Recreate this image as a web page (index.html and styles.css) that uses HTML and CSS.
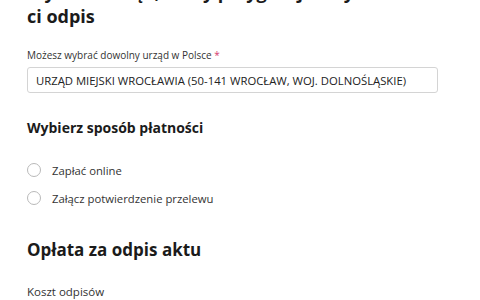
FILE: index.html
```html
<!DOCTYPE html>
<html lang="pl">
	<head>
		<meta charset="UTF-8" />
		<meta name="viewport" content="width=device-width, initial-scale=1.0" />
		<title>Odpis aktu</title>
		<link rel="stylesheet" href="styles.css">
	</head>
	<body>
		<div class="container">
			<h1>Wybierz urząd, który przygotuje i wyśle<br>ci odpis</h1>

			<div class="field">
				<label for="office">Możesz wybrać dowolny urząd w Polsce <span class="required">*</span></label>
				<input type="text" id="office" value="URZĄD MIEJSKI WROCŁAWIA (50-141 WROCŁAW, WOJ. DOLNOŚLĄSKIE)" />
			</div>

			<h2>Wybierz sposób płatności</h2>
			<div class="radio-group">
				<label class="radio">
					<input type="radio" name="payment" value="online" />
					<span class="radio-mark"></span>
					Zapłać online
				</label>
				<label class="radio">
					<input type="radio" name="payment" value="transfer" />
					<span class="radio-mark"></span>
					Załącz potwierdzenie przelewu
				</label>
			</div>

			<h3>Opłata za odpis aktu</h3>
			<p class="cost-label">Koszt odpisów</p>
		</div>
	</body>
</html>
```

FILE: styles.css
```css
body {
	font-family: 'Open Sans', 'Noto Sans', sans-serif;
	margin: 0;
	background-color: #fff;
	color: #333;
	overflow: hidden;
}
.container {
	width: 411px;
	margin: -20px 0 0 27px;
}
h1 {
	font-size: 18px;
	line-height: 24px;
	font-weight: 700;
	color: #1b1b1b;
	margin: 0;
}
.field {
	margin-top: 20px;
	display: flex;
	flex-direction: column;
}
.field label {
	font-size: 10px;
	line-height: 15px;
	color: #333;
}
.required {
	color: #d63a6e;
}
.field input {
	margin-top: 4px;
	height: 26px;
	box-sizing: border-box;
	padding: 0 8px;
	border: 1px solid #d4d4d4;
	border-radius: 3px;
	font-family: inherit;
	font-size: 11.3px;
	color: #222;
	background-color: #fff;
}
h2 {
	font-size: 14px;
	line-height: 20px;
	font-weight: 700;
	color: #1b1b1b;
	margin: 25px 0 0;
}
.radio-group {
	margin-top: 18px;
}
.radio {
	display: flex;
	align-items: center;
	height: 28px;
	font-size: 11.3px;
	color: #333;
	cursor: pointer;
}
.radio input {
	display: none;
}
.radio-mark {
	width: 12px;
	height: 12px;
	border: 1px solid #b9b9b9;
	border-radius: 50%;
	margin-right: 11px;
}
h3 {
	font-size: 17px;
	line-height: 24px;
	font-weight: 700;
	color: #1b1b1b;
	margin: 26px 0 0;
}
.cost-label {
	font-size: 11.5px;
	line-height: 16px;
	margin: 22px 0 0;
	color: #333;
}
```
